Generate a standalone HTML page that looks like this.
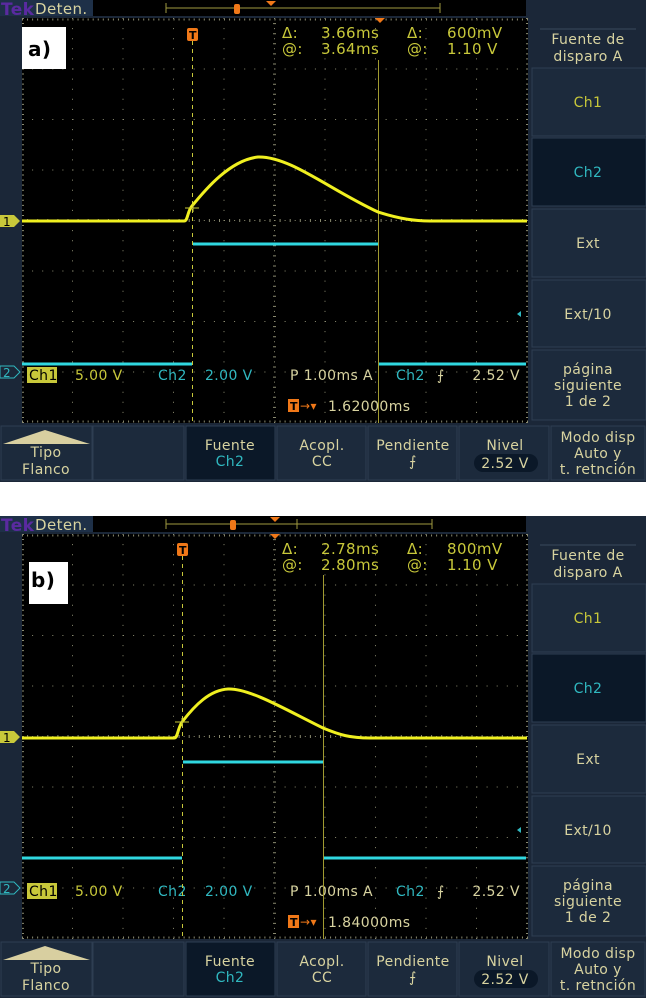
<!DOCTYPE html>
<html><head><meta charset="utf-8"><style>
html,body{margin:0;padding:0;background:#fff;}
svg{display:block;}
text{font-family:"DejaVu Sans","Liberation Sans",sans-serif;letter-spacing:0.4px;}
</style></head><body>
<svg width="646" height="1000" viewBox="0 0 646 1000" xmlns="http://www.w3.org/2000/svg">
<defs>
<g id="frame">
  <rect x="0" y="0" width="646" height="482" fill="#1b2738"/>
  <rect x="0" y="0" width="93" height="16" fill="#1e3048"/>
  <rect x="93" y="0" width="433" height="16" fill="#000"/>
  <rect x="22" y="18" width="506" height="405" fill="#000"/>
  <g stroke="#8a8a70" stroke-width="1" stroke-dasharray="1 9.1">
    <path d="M72.5 18V423M123 18V423M173.5 18V423M224 18V423M325 18V423M375.5 18V423M426 18V423M476.5 18V423"/>
    <path d="M22 69H528M22 119.5H528M22 170H528M22 271H528M22 321.5H528M22 372H528"/>
  </g>
  <g stroke="#8a8a70" stroke-width="1" stroke-dasharray="1 9.1">
    <path d="M274.5 18V423"/><path d="M22 220.5H528"/>
  </g>
  <g stroke="#8a8a70" stroke-width="3" stroke-dasharray="1 9.1">
    <path d="M274.5 18V423" stroke-dashoffset="5"/><path d="M22 220.5H528" stroke-dashoffset="5"/>
    <path d="M22 19.5H528" stroke-width="2" stroke-dasharray="1 4.05"/>
    <path d="M22 421.5H528" stroke-width="2" stroke-dasharray="1 4.05"/>
    <path d="M23 18V423" stroke-width="2" stroke-dasharray="1 4.05"/>
    <path d="M527 18V423" stroke-width="2" stroke-dasharray="1 4.05"/>
  </g>
  <rect x="531" y="20" width="115" height="47" fill="#1b2738"/>
  <line x1="540" y1="29" x2="636" y2="29" stroke="#3a4a5c"/>
  <text x="588" y="44" fill="#d8d3a0" font-size="14" text-anchor="middle">Fuente de</text>
  <text x="588" y="61" fill="#d8d3a0" font-size="14" text-anchor="middle">disparo A</text>
  <rect x="532" y="68" width="114" height="68" fill="#1c2a3c" stroke="#2e3e52"/>
  <text x="588" y="107" fill="#c8c83a" font-size="14" text-anchor="middle">Ch1</text>
  <rect x="532" y="138" width="114" height="68" fill="#0b1828" stroke="#2e3e52"/>
  <text x="588" y="177" fill="#30b8c0" font-size="14" text-anchor="middle">Ch2</text>
  <rect x="532" y="209" width="114" height="68" fill="#1c2a3c" stroke="#2e3e52"/>
  <text x="588" y="248" fill="#d8d3a0" font-size="14" text-anchor="middle">Ext</text>
  <rect x="532" y="280" width="114" height="67" fill="#1c2a3c" stroke="#2e3e52"/>
  <text x="588" y="319" fill="#d8d3a0" font-size="14" text-anchor="middle">Ext/10</text>
  <rect x="532" y="350" width="114" height="70" fill="#1c2a3c" stroke="#2e3e52"/>
  <text x="588" y="374" fill="#d8d3a0" font-size="14" text-anchor="middle">página</text>
  <text x="588" y="390" fill="#d8d3a0" font-size="14" text-anchor="middle">siguiente</text>
  <text x="588" y="406" fill="#d8d3a0" font-size="14" text-anchor="middle">1 de 2</text>
  <path d="M521 311l-4 3 4 3z" fill="#30b8c0"/>
  <g stroke="#2e3e52" fill="#1c2a3c">
    <rect x="1" y="426" width="91" height="54"/><rect x="93" y="426" width="91" height="54"/>
    <rect x="186" y="426" width="89" height="54" fill="#0b1828"/><rect x="277" y="426" width="89" height="54"/>
    <rect x="368" y="426" width="89" height="54"/><rect x="459" y="426" width="90" height="54"/>
    <rect x="551" y="426" width="94" height="54"/>
  </g>
  <path d="M3 444L45 430L90 444Z" fill="#d8cfa0"/>
  <g fill="#d8d3a0" font-size="14" text-anchor="middle">
    <text x="46" y="457">Tipo</text><text x="46" y="474">Flanco</text>
    <text x="230" y="450">Fuente</text><text x="230" y="466" fill="#30b8c0">Ch2</text>
    <text x="322" y="450">Acopl.</text><text x="322" y="466">CC</text>
    <text x="413" y="450">Pendiente</text><text x="413" y="466">⨍</text>
    <text x="505" y="450">Nivel</text>
    <text x="598" y="442">Modo disp</text><text x="598" y="458">Auto y</text><text x="598" y="474">t. retnción</text>
  </g>
  <rect x="474" y="454" width="64" height="18" rx="9" fill="#0b1828"/>
  <text x="505" y="468" fill="#d8d3a0" font-size="14" text-anchor="middle">2.52 V</text>
  <text x="1" y="15" fill="#5a2aa0" font-size="17" font-weight="bold" letter-spacing="-1">Tek</text>
  <text x="35" y="14" fill="#d8d3a0" font-size="15">Deten.</text>
  <rect x="27" y="367" width="30" height="16" fill="#c8c83a"/>
  <text x="29" y="380" fill="#000" font-size="14">Ch1</text>
  <text x="75" y="380" fill="#c8c83a" font-size="14">5.00 V</text>
  <text x="158" y="380" fill="#30b8c0" font-size="14">Ch2</text>
  <text x="205" y="380" fill="#30b8c0" font-size="14">2.00 V</text>
  <text x="290" y="380" fill="#d8d3a0" font-size="14" letter-spacing="1">P 1.00ms  A</text>
  <text x="396" y="380" fill="#30b8c0" font-size="14">Ch2</text>
  <text x="437" y="380" fill="#d8d3a0" font-size="14">⨍</text>
  <text x="520" y="380" fill="#d8d3a0" font-size="14" text-anchor="end">2.52 V</text>
  <rect x="288" y="399" width="11" height="13" fill="#f07818"/>
  <text x="290" y="410" fill="#000" font-size="11" font-weight="bold">T</text>
  <text x="300" y="410" fill="#f07818" font-size="12">→▾</text>
  <g fill="#c8c83a" font-size="15">
    <text x="282" y="38">Δ:</text><text x="407" y="38">Δ:</text>
    <text x="282" y="54">@:</text><text x="407" y="54">@:</text>
  </g>
  <path d="M0 215h14l6 6-6 6H0z" fill="#c8c83a"/><text x="3" y="226" fill="#000" font-size="12">1</text>
  <path d="M0 366h14l6 6-6 6H0z" fill="#1b2738" stroke="#30b8c0"/><text x="3" y="377" fill="#30b8c0" font-size="12">2</text>
</g>
</defs>

<use href="#frame"/>
<rect x="22" y="27" width="44" height="42" fill="#fff"/>
<text x="28" y="56" fill="#000" font-family="Liberation Serif,serif" font-size="20" font-weight="bold">a)</text>
<path d="M166 3V13M166 8H440M440 3V13" stroke="#a09a40" fill="none"/>
<rect x="234" y="4" width="6" height="10" rx="2" fill="#f07818"/>
<path d="M266 1h10l-5 5z" fill="#f07818"/>
<path d="M375 18h10l-5 5z" fill="#f07818"/>
<rect x="187" y="28" width="11" height="13" rx="2" fill="#f07818"/>
<text x="189" y="39" fill="#000" font-size="11" font-weight="bold">T</text>
<line x1="192.5" y1="41" x2="192.5" y2="423" stroke="#c8c83a" stroke-dasharray="4 4"/>
<line x1="378.5" y1="60" x2="378.5" y2="423" stroke="#a09a30"/>
<g fill="#c8c83a" font-size="15"><text x="321" y="38">3.66ms</text><text x="447" y="38">600mV</text><text x="321" y="54">3.64ms</text><text x="447" y="54">1.10 V</text></g>
<text x="328" y="411" fill="#d8d3a0" font-size="14" letter-spacing="1">1.62000ms</text>
<path d="M22 364H192M193 244H378M379 364H526" stroke="#30d8e0" stroke-width="3" fill="none"/>
<path d="M22 221H184C188 221 187 212 192 206C205 190 230 160 258 157C290 156 330 190 378 212C400 219 415 221 430 221H527" stroke="#f0f020" stroke-width="3" fill="none"/>
<path d="M185 208H199M193 204V212" stroke="#c8c83a"/>

<rect x="0" y="482" width="646" height="33" fill="#fff"/>
<g transform="translate(0,516)"><use href="#frame"/></g>
<rect x="29" y="562" width="39" height="42" fill="#fff"/>
<text x="31" y="587" fill="#000" font-family="Liberation Serif,serif" font-size="20" font-weight="bold">b)</text>
<path d="M166 519V529M166 524H432M432 519V529" stroke="#a09a40" fill="none"/>
<line x1="297" y1="519" x2="297" y2="529" stroke="#a09a40"/>
<rect x="230" y="520" width="6" height="10" rx="2" fill="#f07818"/>
<path d="M270 517h10l-5 5z" fill="#f07818"/>
<path d="M270 534h10l-5 5z" fill="#f07818"/>
<rect x="177" y="543" width="11" height="13" rx="2" fill="#f07818"/>
<text x="179" y="554" fill="#000" font-size="11" font-weight="bold">T</text>
<line x1="182.5" y1="556" x2="182.5" y2="939" stroke="#c8c83a" stroke-dasharray="4 4"/>
<line x1="323.5" y1="575" x2="323.5" y2="939" stroke="#a09a30"/>
<g fill="#c8c83a" font-size="15"><text x="321" y="554">2.78ms</text><text x="447" y="554">800mV</text><text x="321" y="570">2.80ms</text><text x="447" y="570">1.10 V</text></g>
<text x="328" y="927" fill="#d8d3a0" font-size="14" letter-spacing="1">1.84000ms</text>
<path d="M22 858H182M183 762H323M324 858H526" stroke="#30d8e0" stroke-width="3" fill="none"/>
<path d="M22 738H174C178 738 177 730 182 722C195 705 210 690 228 689C250 688 290 712 323 728C340 735 350 738 370 738H527" stroke="#f0f020" stroke-width="3" fill="none"/>
<path d="M175 722H189M182 718V726" stroke="#c8c83a"/>
</svg>
</body></html>
